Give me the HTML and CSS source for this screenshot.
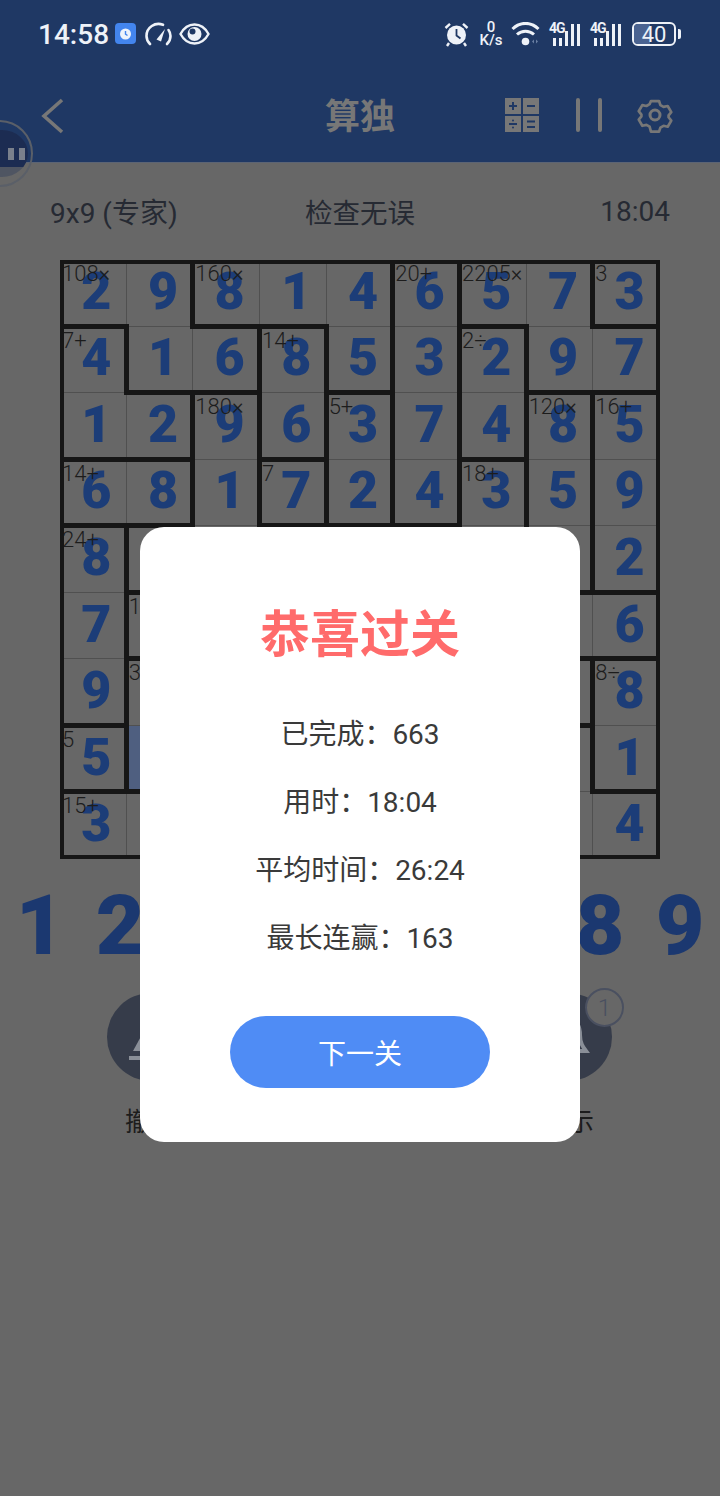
FILE: index.html
```html
<!DOCTYPE html>
<html>
<head>
  <meta charset="utf-8">
  <link rel="stylesheet" href="styles.css">
</head>
<body>
  <div id="root">
    <div class="status-bar">
      <div class="status-left">
        <span class="clock">14:58</span>
        <svg class="app-icon" width="22" height="22" viewBox="0 0 22 22"><rect width="21" height="21" rx="4" fill="#4385ee"/><circle cx="10.5" cy="11" r="5.5" fill="#eef3fb"/><path d="M10.5 8v3.2l2 1.3" fill="none" stroke="#4385ee" stroke-width="1.4"/></svg>
        <svg class="gauge-icon" width="27" height="24" viewBox="0 0 27 24"><path d="M5 22C2.500 19.500 1.500 17 1.500 14A12 12 0 0 1 18 2.800" fill="none" stroke="#eef2f8" stroke-width="2.600" stroke-linecap="round"/><path d="M23.500 8C25 10 25.500 12 25.500 14C25.500 17 24.500 19.500 22 22" fill="none" stroke="#eef2f8" stroke-width="2.600" stroke-linecap="round"/><path d="M11.500 17.500L20 7L16 19.500Z" fill="#eef2f8"/></svg>
        <svg class="eye-icon" width="31" height="22" viewBox="0 0 31 22"><path d="M1.500 11C5 4.500 10 1.500 15.500 1.500S26 4.500 29.500 11C26 17.500 21 20.500 15.500 20.500S5 17.500 1.500 11Z" fill="none" stroke="#eef2f8" stroke-width="2.400"/><circle cx="15.500" cy="11" r="7" fill="#eef2f8"/><circle cx="13.500" cy="8.500" r="3" fill="#1f3864"/></svg>
      </div>
      <div class="status-right">
        <svg class="alarm-icon" width="25" height="25" viewBox="0 0 25 25"><circle cx="12.500" cy="13" r="9.500" fill="#eef2f8"/><path d="M12.500 7v6.500l4 3" fill="none" stroke="#1f3864" stroke-width="1.800"/><path d="M1.500 6L6 1.800M23.500 6L19 1.800M5 21L3 24M20 21L22 24" stroke="#eef2f8" stroke-width="2.400" fill="none"/></svg>
        <div class="speed"><span>0</span><span>K/s</span></div>
        <svg class="wifi-icon" width="30" height="24" viewBox="0 0 30 24"><path d="M1.500 7C9 -0.500 20 -0.500 27.500 7" fill="none" stroke="#eef2f8" stroke-width="3"/><path d="M6 12.500C11 8 18 8 23 12.500" fill="none" stroke="#eef2f8" stroke-width="3"/><circle cx="14.500" cy="19.500" r="3.800" fill="#eef2f8"/><path d="M21 19.500l2-2v4zM25 17.500l2 2-2 2z" fill="#6b7fa3"/></svg>
        <div class="signal">
          <span class="net">4G</span>
          <i class="b1"></i><i class="b1"></i><i class="b2"></i><i class="b3"></i><i class="b3"></i>
        </div>
        <div class="signal">
          <span class="net">4G</span>
          <i class="b1"></i><i class="b1"></i><i class="b2"></i><i class="b3"></i><i class="b3"></i>
        </div>
        <div class="battery"><div class="battery-body"><div class="battery-fill"></div><span>40</span></div><div class="battery-tip"></div></div>
      </div>
    </div>

    <div class="header">
      <svg class="back" width="24" height="36" viewBox="0 0 24 36"><path d="M21 2L3 18L21 34" fill="none" stroke="#777" stroke-width="3.600"/></svg>
      <div class="header-title">算独</div>
      <div class="header-actions">
        <svg width="34" height="34" viewBox="0 0 34 34"><rect x="0" y="0" width="16" height="16" fill="#777"/><rect x="18" y="0" width="16" height="16" fill="#777"/><rect x="0" y="18" width="16" height="16" fill="#777"/><rect x="18" y="18" width="16" height="16" fill="#777"/><path d="M4 8h8M8 4v8M22 8h8M4 26h8M22 23.500h8M22 29h8" stroke="#1f3864" stroke-width="2"/><circle cx="8" cy="22.500" r="1" fill="#1f3864"/><circle cx="8" cy="29.500" r="1" fill="#1f3864"/></svg>
        <svg class="pause" width="26" height="36" viewBox="0 0 26 36"><rect x="0" y="1" width="4" height="34" rx="2" fill="#777"/><rect x="22" y="1" width="4" height="34" rx="2" fill="#777"/></svg>
        <svg class="gear" width="36" height="36" viewBox="0 0 36 36"><path d="M13.500 2.500h9l1.500 4.500 3.500 2 4.600-1 4 6.800-3 3.700v2l3 3.700-4 6.800-4.600-1-3.500 2-1.500 4.500h-9L12 31l-3.500-2-4.600 1-4-6.800 3-3.700v-2l-3-3.700 4-6.800 4.600 1 3.500-2z" transform="translate(1.800 1.800) scale(.9)" fill="none" stroke="#777" stroke-width="3" stroke-linejoin="round"/><circle cx="18" cy="18" r="5" fill="none" stroke="#777" stroke-width="3"/></svg>
      </div>
    </div>

    <div class="float-ball"><div class="ball-face"><i></i><i></i></div></div>

    <div class="info-row">
      <span>9x9 (专家)</span>
      <span class="info-mid">检查无误</span>
      <span class="info-end">18:04</span>
    </div>

    <div class="board">
      <div class="cell b"><em>108×</em>2</div>
      <div class="cell r">9</div>
      <div class="cell b"><em>160×</em>8</div>
      <div class="cell b">1</div>
      <div class="cell r">4</div>
      <div class="cell r"><em>20+</em>6</div>
      <div class="cell b"><em>2205×</em>5</div>
      <div class="cell r">7</div>
      <div class="cell b"><em>3</em>3</div>

      <div class="cell r"><em>7+</em>4</div>
      <div class="cell b">1</div>
      <div class="cell r b">6</div>
      <div class="cell r"><em>14+</em>8</div>
      <div class="cell r b">5</div>
      <div class="cell r">3</div>
      <div class="cell r"><em>2÷</em>2</div>
      <div class="cell b">9</div>
      <div class="cell b">7</div>

      <div class="cell b">1</div>
      <div class="cell r b">2</div>
      <div class="cell r"><em>180×</em>9</div>
      <div class="cell r b">6</div>
      <div class="cell r"><em>5+</em>3</div>
      <div class="cell r">7</div>
      <div class="cell r b">4</div>
      <div class="cell r"><em>120×</em>8</div>
      <div class="cell"><em>16+</em>5</div>

      <div class="cell b"><em>14+</em>6</div>
      <div class="cell r b">8</div>
      <div class="cell r">1</div>
      <div class="cell r b"><em>7</em>7</div>
      <div class="cell r b">2</div>
      <div class="cell r b">4</div>
      <div class="cell r"><em>18+</em>3</div>
      <div class="cell r">5</div>
      <div class="cell">9</div>

      <div class="cell r"><em>24+</em>8</div>
      <div class="cell b">5</div>
      <div class="cell">3</div>
      <div class="cell">4</div>
      <div class="cell">9</div>
      <div class="cell">1</div>
      <div class="cell">7</div>
      <div class="cell r b">6</div>
      <div class="cell b">2</div>

      <div class="cell r">7</div>
      <div class="cell b"><em>1</em>3</div>
      <div class="cell">4</div>
      <div class="cell">5</div>
      <div class="cell">8</div>
      <div class="cell">2</div>
      <div class="cell">9</div>
      <div class="cell b">1</div>
      <div class="cell b">6</div>

      <div class="cell r b">9</div>
      <div class="cell"><em>3</em>4</div>
      <div class="cell">5</div>
      <div class="cell">2</div>
      <div class="cell">6</div>
      <div class="cell">8</div>
      <div class="cell">1</div>
      <div class="cell r b">3</div>
      <div class="cell"><em>8÷</em>8</div>

      <div class="cell r b"><em>5</em>5</div>
      <div class="cell b selected">6</div>
      <div class="cell">2</div>
      <div class="cell">3</div>
      <div class="cell">1</div>
      <div class="cell">9</div>
      <div class="cell">8</div>
      <div class="cell r">4</div>
      <div class="cell b">1</div>

      <div class="cell"><em>15+</em>3</div>
      <div class="cell">7</div>
      <div class="cell">9</div>
      <div class="cell">6</div>
      <div class="cell">5</div>
      <div class="cell">1</div>
      <div class="cell">2</div>
      <div class="cell">8</div>
      <div class="cell">4</div>
    </div>

    <div class="numbers">
      <span>1</span><span>2</span><span>3</span><span>4</span><span>5</span><span>6</span><span>7</span><span>8</span><span>9</span>
    </div>

    <div class="tools">
      <div class="tool">
        <div class="tool-btn">
          <svg width="48" height="48" viewBox="0 0 48 48"><path d="M24 5L6 38H42Z" fill="#8a8f98"/><rect x="2" y="43" width="44" height="4" fill="#8a8f98"/></svg>
        </div>
        <div class="tool-label">撤销</div>
      </div>
      <div class="tool">
        <div class="tool-btn"></div>
        <div class="tool-label">擦除</div>
      </div>
      <div class="tool">
        <div class="tool-btn"></div>
        <div class="tool-label">笔记</div>
      </div>
      <div class="tool">
        <div class="tool-btn">
          <svg width="48" height="48" viewBox="0 0 48 48"><path d="M24 6C15 6 12 14 12 22C12 30 9 34 6 38H42C39 34 36 30 36 22C36 14 33 6 24 6Z" fill="none" stroke="#8a8f98" stroke-width="4"/></svg>
          <div class="badge">1</div>
        </div>
        <div class="tool-label">提示</div>
      </div>
    </div>

    <div class="modal">
      <div class="modal-title">恭喜过关</div>
      <div class="modal-rows">
        <div>已完成：663</div>
        <div>用时：18:04</div>
        <div>平均时间：26:24</div>
        <div>最长连赢：163</div>
      </div>
      <button class="next-btn">下一关</button>
    </div>
  </div>
</body>
</html>
```

FILE: styles.css
```css
* {
  box-sizing: border-box;
}

html, body {
  margin: 0;
  padding: 0;
}

body {
  background: #676767;
  font-family: Roboto, 'Noto Sans CJK SC', sans-serif;
  color: #262a33;
}

#root {
  position: relative;
  width: 720px;
  height: 1496px;
  overflow: hidden;
}

.status-bar {
  height: 66px;
  background: #1f3864;
  display: flex;
  justify-content: space-between;
  align-items: center;
  padding: 2px 39px 0 38px;
  color: #eef2f8;
}

.status-left {
  display: flex;
  align-items: center;
}

.clock {
  font-size: 28px;
  font-weight: 500;
  width: 77px;
}

.gauge-icon {
  margin-left: 8px;
}

.eye-icon {
  margin-left: 7px;
}

.status-right {
  display: flex;
  align-items: center;
}

.speed {
  display: flex;
  flex-direction: column;
  align-items: center;
  width: 22px;
  margin-left: 11px;
  font-size: 15px;
  line-height: 13px;
  font-weight: 500;
}

.wifi-icon {
  margin-left: 9px;
}

.signal {
  position: relative;
  display: flex;
  align-items: flex-end;
  gap: 3px;
  width: 33px;
  height: 24px;
  margin-left: 8px;
  padding-left: 4px;
}

.signal .net {
  position: absolute;
  left: 0;
  top: 0;
  font-size: 14px;
  line-height: 12px;
  font-weight: 700;
  letter-spacing: -1px;
}

.signal i {
  display: block;
  width: 3px;
  background: #eef2f8;
}

.signal .b1 { height: 8px; }
.signal .b2 { height: 15px; }
.signal .b3 { height: 22px; }

.battery {
  display: flex;
  align-items: center;
  margin-left: 9px;
}

.battery-body {
  position: relative;
  width: 44px;
  height: 24px;
  border: 2px solid #eef2f8;
  border-radius: 6px;
  overflow: hidden;
  display: flex;
  align-items: center;
  justify-content: center;
  font-size: 22px;
}

.battery-fill {
  position: absolute;
  left: 0;
  top: 0;
  bottom: 0;
  width: 40%;
  background: #4a6391;
}

.battery-body span {
  position: relative;
}

.battery-tip {
  width: 3px;
  height: 10px;
  margin-left: 2px;
  background: #eef2f8;
  border-radius: 0 2px 2px 0;
}

.header {
  position: relative;
  height: 97px;
  background: #1f3864;
  border-bottom: 1px solid #5c6474;
  display: flex;
  align-items: center;
  justify-content: center;
  padding-bottom: 2px;
}

.back {
  position: absolute;
  left: 41px;
  top: 32px;
}

.header-title {
  font-size: 35px;
  font-weight: 700;
  color: #777;
}

.header-actions {
  position: absolute;
  right: 47px;
  top: 31px;
  display: flex;
  align-items: center;
}

.pause {
  margin: 0 35px 0 37px;
}

.float-ball {
  position: absolute;
  left: -34px;
  top: 120px;
  width: 67px;
  height: 67px;
  padding: 8px 3px 8px 8px;
  border: 2px solid #5a5f68;
  border-radius: 50%;
}

.ball-face {
  height: 100%;
  border-radius: 50%;
  background: linear-gradient(#1c2c52 78%, #4f5562 78%);
  display: flex;
  justify-content: flex-end;
  align-items: center;
  gap: 5px;
  padding-right: 3px;
}

.ball-face i {
  display: block;
  width: 6px;
  height: 12px;
  background: #7a808c;
}

.info-row {
  display: grid;
  grid-template-columns: 1fr auto 1fr;
  align-items: center;
  height: 34px;
  margin-top: 28px;
  padding: 0 50px;
  font-size: 28px;
}

.info-mid {
  font-size: 27.5px;
}

.info-end {
  text-align: right;
}

.board {
  position: relative;
  display: grid;
  grid-template-columns: repeat(9, 1fr);
  grid-template-rows: repeat(9, 1fr);
  width: 600px;
  height: 599px;
  margin: 35px 0 0 60px;
  overflow: hidden;
}

.board::after {
  content: "";
  position: absolute;
  inset: 0;
  border: 4px solid #161616;
  pointer-events: none;
  z-index: 3;
}

.cell {
  position: relative;
  display: flex;
  align-items: center;
  justify-content: center;
  padding: 0 0 3px 7px;
  border-right: 1px solid #505050;
  border-bottom: 1px solid #505050;
  font-size: 52px;
  font-weight: 900;
  color: #1c3d78;
}

.cell.selected {
  background: #4f5f80;
}

.cell em {
  position: absolute;
  left: 2px;
  top: 2px;
  font-size: 22px;
  line-height: 24px;
  font-style: normal;
  font-weight: 300;
  color: #1c1c1c;
  z-index: 2;
  white-space: nowrap;
}

.cell.r::after {
  content: "";
  position: absolute;
  right: -3px;
  top: -3px;
  bottom: -3px;
  width: 5px;
  background: #161616;
  z-index: 1;
}

.cell.b::before {
  content: "";
  position: absolute;
  left: -3px;
  right: -3px;
  bottom: -3px;
  height: 5px;
  background: #161616;
  z-index: 1;
}

.numbers {
  display: grid;
  grid-template-columns: repeat(9, 80px);
  margin-top: 21px;
  text-align: center;
  font-size: 84px;
  line-height: 92px;
  font-weight: 900;
  color: #1b3870;
}

.tools {
  display: flex;
  justify-content: space-between;
  margin-top: 21px;
  padding: 0 85px 0 84px;
}

.tool {
  width: 134px;
  display: flex;
  flex-direction: column;
  align-items: center;
}

.tool-btn {
  position: relative;
  width: 88px;
  height: 88px;
  border-radius: 50%;
  background: #363c4a;
  display: flex;
  align-items: center;
  justify-content: center;
}

.badge {
  position: absolute;
  right: -12px;
  top: -5px;
  width: 39px;
  height: 39px;
  border: 2px solid #4a5060;
  border-radius: 50%;
  background: #676767;
  display: flex;
  align-items: center;
  justify-content: center;
  font-size: 24px;
  font-weight: 300;
  color: #4a5060;
}

.tool-label {
  margin-top: 26px;
  font-size: 26px;
  line-height: 30px;
  color: #1c1c1c;
}

.modal {
  position: absolute;
  left: 140px;
  top: 527px;
  width: 440px;
  height: 615px;
  padding-top: 72px;
  background: #fff;
  border-radius: 24px;
  display: flex;
  flex-direction: column;
  align-items: center;
  z-index: 5;
}

.modal-title {
  font-size: 50px;
  line-height: 72px;
  font-weight: 700;
  color: #ff6b6b;
}

.modal-rows {
  margin-top: 44px;
  display: flex;
  flex-direction: column;
  align-items: center;
  gap: 28px;
  font-size: 28px;
  line-height: 40px;
  color: #3a3a3a;
}

.next-btn {
  width: 260px;
  height: 72px;
  margin-top: 57px;
  border: none;
  border-radius: 36px;
  background: #4f8cf5;
  color: #fff;
  font-family: Roboto, 'Noto Sans CJK SC', sans-serif;
  font-size: 28px;
}
```
